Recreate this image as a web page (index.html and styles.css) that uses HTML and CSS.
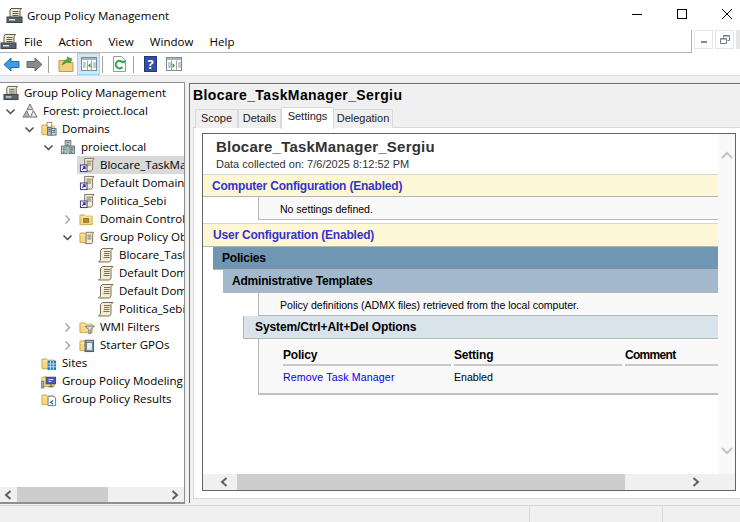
FILE: index.html
```html
<!DOCTYPE html>
<html lang="en">
<head>
    <meta charset="UTF-8">
    <title>Group Policy Management</title>
    <link rel="stylesheet" href="styles.css">
</head>
<body>

<svg class="defs" width="0" height="0">
    <symbol id="scroll" viewBox="0 0 16 16">
        <path d="M4.500 1.500h10.500l-2 2v9.500l-1.500 2h-11l2-2v-9.500z" fill="#f3ecd0" stroke="#77705c"/>
        <path d="M6 4.500h6M6 6.500h5.500M6 8.500h5.500M5.500 10.500h6" stroke="#77705c"/>
    </symbol>
    <symbol id="gpm" viewBox="0 0 17 17">
        <path d="M5 1.500h10.500l-1.500 2v7h-10v-7z" fill="#f3ecd0" stroke="#5c5a50"/>
        <path d="M6.500 4.500h6M6.500 6.500h6M6.500 8.500h6" stroke="#5c5a50"/>
        <rect x="1" y="10" width="15" height="5.500" fill="#56636b" stroke="#3a4247"/>
        <rect x="3" y="12" width="6" height="1.500" fill="#d8dde0"/>
    </symbol>
    <symbol id="link" viewBox="0 0 17 17">
        <path d="M6 1.500h10l-1.500 2v9.500l-1.500 2h-8v-4l1-2v-5.500z" fill="#f3ecd0" stroke="#77705c"/>
        <path d="M8 4.500h5.500M8 6.500h5M8 8.500h5" stroke="#77705c"/>
        <rect x="1.500" y="8.500" width="7" height="7" fill="#fff" stroke="#33367a"/>
        <path d="M3.500 13.500l2.500-2.500M4 10.500h2.500v2.500" fill="none" stroke="#2b2f9a" stroke-width="1.200"/>
    </symbol>
    <symbol id="forest" viewBox="0 0 17 17">
        <path d="M8.500 1l3 6h-6z" fill="#d8d8d8" stroke="#6e6e6e"/>
        <path d="M5 8l3 7h-7z" fill="#b4b4b4" stroke="#6e6e6e"/>
        <path d="M12 8l4 7h-7z" fill="#e6e6e6" stroke="#6e6e6e"/>
    </symbol>
    <symbol id="folder" viewBox="0 0 17 17">
        <path d="M1 4.500v10h13v-9h-7l-1.500-1.500z" fill="#f4d77f" stroke="#c9a64f"/>
        <path d="M1.500 6.500h12" stroke="#fdf0bd"/>
    </symbol>
    <symbol id="domains" viewBox="0 0 17 17">
        <use href="#folder"/>
        <rect x="6.500" y="1.500" width="5" height="5" fill="#fff" stroke="#a08c58"/>
        <rect x="7" y="7" width="4" height="8" fill="#b7c2c8" stroke="#5d6d75"/>
        <rect x="11" y="8" width="5" height="7" fill="#d0d8dc" stroke="#5d6d75"/>
        <path d="M8 9h2M8 11h2M12 10h3M12 12h3" stroke="#4d5a61"/>
    </symbol>
    <symbol id="domain" viewBox="0 0 17 17">
        <rect x="5.500" y="1.500" width="6" height="6" fill="#cdd5d9" stroke="#66757c"/>
        <rect x="1.500" y="7.500" width="6" height="8" fill="#cdd5d9" stroke="#66757c"/>
        <rect x="9.500" y="7.500" width="6" height="8" fill="#b5c0c6" stroke="#66757c"/>
        <path d="M7 3.500h3M3 9.500h3M11 9.500h3M3 11.500h3M11 11.500h3" stroke="#4d5a61"/>
        <rect x="3" y="13" width="2" height="2" fill="#27b03c"/>
        <rect x="11" y="13" width="2" height="2" fill="#27b03c"/>
        <rect x="7" y="5" width="2" height="2" fill="#27b03c"/>
    </symbol>
    <symbol id="dc" viewBox="0 0 17 17">
        <use href="#folder"/>
        <rect x="5" y="8" width="5" height="4" fill="#b9962f" stroke="#8a6f22"/>
    </symbol>
    <symbol id="gpofolder" viewBox="0 0 17 17">
        <use href="#folder"/>
        <path d="M7.500 3.500h8l-1 1.500v9l-1 1.500h-7l1-1.500v-9z" fill="#f3ecd0" stroke="#77705c"/>
        <path d="M9 6.500h4M9 8.500h4M9 10.500h4" stroke="#77705c"/>
    </symbol>
    <symbol id="wmi" viewBox="0 0 17 17">
        <use href="#folder"/>
        <path d="M6.500 7.500h10l-4 4v4h-2v-4z" fill="#d0dbe2" stroke="#65767f"/>
    </symbol>
    <symbol id="starter" viewBox="0 0 17 17">
        <use href="#folder"/>
        <rect x="6.500" y="3.500" width="9" height="12" fill="#9fb6cc" stroke="#3f5368"/>
        <rect x="8" y="6" width="6" height="8" fill="#e9eef3" stroke="#3f5368" stroke-width=".6"/>
    </symbol>
    <symbol id="sites" viewBox="0 0 17 17">
        <use href="#folder"/>
        <rect x="7" y="6" width="9" height="10" fill="#1f77c4"/>
        <path d="M7 9.500h9M7 12.500h9M10 6v10M13 6v10" stroke="#cfe6f8"/>
    </symbol>
    <symbol id="model" viewBox="0 0 17 17">
        <use href="#folder"/>
        <rect x="0" y="9" width="3" height="7" fill="#9aa7ae" stroke="#5d6d75" stroke-width=".7"/>
        <rect x="5.500" y="4.500" width="10" height="7" fill="#4a5bb0" stroke="#3b4360"/>
        <path d="M8 7h5M8 9h3" stroke="#dfe5f7"/>
        <path d="M8 14.500h5M10.500 12v2" stroke="#5d6d75" stroke-width="1.500"/>
    </symbol>
    <symbol id="results" viewBox="0 0 17 17">
        <use href="#folder"/>
        <path d="M7.500 5.500h6l2 2v8h-8z" fill="#fff" stroke="#6c7378"/>
        <path d="M13 10l-3 2 3 2" fill="none" stroke="#2b6fb0" stroke-width="1.200"/>
    </symbol>
    <symbol id="chev-open" viewBox="0 0 14 9">
        <path d="M3.500 2.500l4 4 4-4" fill="none" stroke="#4b4b4b" stroke-width="1.500"/>
    </symbol>
    <symbol id="chev-shut" viewBox="0 0 14 9">
        <path d="M5.500 .5l4 4-4 4" fill="none" stroke="#a6a6a6" stroke-width="1.500"/>
    </symbol>
    <symbol id="arrow-l" viewBox="0 0 8 10">
        <path d="M6.500 1l-4.500 4 4.500 4" fill="none" stroke="#606060" stroke-width="2"/>
    </symbol>
    <symbol id="arrow-r" viewBox="0 0 8 10">
        <path d="M1.500 1l4.500 4-4.500 4" fill="none" stroke="#606060" stroke-width="2"/>
    </symbol>
</svg>

<div class="titlebar">
    <svg class="title-icon"><use href="#gpm"/></svg>
    <span class="title-text">Group Policy Management</span>
    <div class="winbtns">
        <svg class="winbtn" viewBox="0 0 12 12"><path d="M1 6.500h10" stroke="#000"/></svg>
        <svg class="winbtn" viewBox="0 0 12 12"><rect x="1.500" y="1.500" width="9" height="9" fill="none" stroke="#000"/></svg>
        <svg class="winbtn" viewBox="0 0 12 12"><path d="M1 1l10 10M11 1l-10 10" stroke="#000"/></svg>
    </div>
</div>

<div class="menubar">
    <div class="menu-left">
        <svg class="menu-icon"><use href="#gpm"/></svg>
        <span>File</span>
        <span>Action</span>
        <span>View</span>
        <span>Window</span>
        <span>Help</span>
    </div>
    <div class="mdi">
        <div class="mdi-btn"><svg width="8" height="8" viewBox="0 0 8 8"><rect x="1" y="5" width="6" height="2" fill="#7c8a9c"/></svg></div>
        <div class="mdi-btn"><svg width="10" height="10" viewBox="0 0 10 10"><path d="M3.500 2.500v-2h6v5h-2M.5 3.500h6v5h-6z" fill="none" stroke="#6f7d8e"/><path d="M1 4h5M4 1h5" stroke="#6f7d8e"/></svg></div>
        <div class="mdi-btn mdi-close"><svg width="8" height="8" viewBox="0 0 8 8"><path d="M1 1l6 6M7 1l-6 6" stroke="#9aa5b1" stroke-width="2"/></svg></div>
    </div>
</div>

<div class="toolbar">
    <div class="tool"><svg width="17" height="15" viewBox="0 0 17 15"><path d="M1 7.500l7-6.500v3.500h8v6h-8v3.500z" fill="#3f9be8" stroke="#1f6fb5"/></svg></div>
    <div class="tool"><svg width="17" height="15" viewBox="0 0 17 15"><path d="M16 7.500l-7-6.500v3.500h-8v6h8v3.500z" fill="#8a8a8a" stroke="#666"/></svg></div>
    <div class="sep"></div>
    <div class="tool"><svg width="16" height="16" viewBox="0 0 16 16"><path d="M1 4.500v11h14v-9h-6l-2-2z" fill="#f2d27a" stroke="#c09a45"/><path d="M4 9c1-3 3-5 6-6l-1-2 5 2-2 4-1-1.500c-2 .5-4 1.500-7 3.500z" fill="#4caf3f" stroke="#2f7f28" stroke-width=".6"/></svg></div>
    <div class="tool tool-on"><svg width="16" height="14" viewBox="0 0 16 14"><rect x=".5" y=".5" width="15" height="13" fill="#fff" stroke="#7d8a93"/><rect x="1" y="1" width="14" height="2" fill="#a9b5bd"/><path d="M6.500 3.500v10M10.500 3.500v10" stroke="#9aa5ad"/><path d="M2 6h3M2 8h3M2 10h3M12 6h3M12 8h3M12 10h3" stroke="#8a98a2"/><path d="M9.500 6v5l-2.500-2.500z" fill="#2a9d4b"/></svg></div>
    <div class="sep"></div>
    <div class="tool"><svg width="15" height="16" viewBox="0 0 15 16"><path d="M1.500.5h8l4 4v11h-12z" fill="#fff" stroke="#9a9a9a"/><path d="M11 7a3.800 3.800 0 1 0-.5 4" fill="none" stroke="#2fa84f" stroke-width="2"/><path d="M9 5.500l3.500 2 1-3.500z" fill="#2fa84f"/></svg></div>
    <div class="sep"></div>
    <div class="tool"><span class="help-btn">?</span></div>
    <div class="tool"><svg width="16" height="14" viewBox="0 0 16 14"><rect x=".5" y=".5" width="15" height="13" fill="#fff" stroke="#7d8a93"/><rect x="1" y="1" width="14" height="2" fill="#a9b5bd"/><path d="M5.500 3.500v10M10.500 3.500v10" stroke="#9aa5ad"/><path d="M2 6h3M2 8h3M2 10h3M12 6h3M12 8h3M12 10h3" stroke="#8a98a2"/><path d="M6.500 6v5l2.500-2.500z" fill="#2a9d4b"/></svg></div>
</div>

<div class="main">
    <div class="left">
        <div class="tree">
            <div class="row lv0"><div class="node"><svg class="ico"><use href="#gpm"/></svg>Group Policy Management</div></div>
            <div class="row lv1"><svg class="chev"><use href="#chev-open"/></svg><div class="node"><svg class="ico"><use href="#forest"/></svg>Forest: proiect.local</div></div>
            <div class="row lv2"><svg class="chev"><use href="#chev-open"/></svg><div class="node"><svg class="ico"><use href="#domains"/></svg>Domains</div></div>
            <div class="row lv3"><svg class="chev"><use href="#chev-open"/></svg><div class="node"><svg class="ico"><use href="#domain"/></svg>proiect.local</div></div>
            <div class="row lv4"><span class="chev"></span><div class="node selected"><svg class="ico"><use href="#link"/></svg>Blocare_TaskManager_Sergiu</div></div>
            <div class="row lv4"><span class="chev"></span><div class="node"><svg class="ico"><use href="#link"/></svg>Default Domain Policy</div></div>
            <div class="row lv4"><span class="chev"></span><div class="node"><svg class="ico"><use href="#link"/></svg>Politica_Sebi</div></div>
            <div class="row lv4"><svg class="chev"><use href="#chev-shut"/></svg><div class="node"><svg class="ico"><use href="#dc"/></svg>Domain Controllers</div></div>
            <div class="row lv4"><svg class="chev"><use href="#chev-open"/></svg><div class="node"><svg class="ico"><use href="#gpofolder"/></svg>Group Policy Objects</div></div>
            <div class="row lv5"><span class="chev"></span><div class="node"><svg class="ico"><use href="#scroll"/></svg>Blocare_TaskManager_Sergiu</div></div>
            <div class="row lv5"><span class="chev"></span><div class="node"><svg class="ico"><use href="#scroll"/></svg>Default Domain Controllers Policy</div></div>
            <div class="row lv5"><span class="chev"></span><div class="node"><svg class="ico"><use href="#scroll"/></svg>Default Domain Policy</div></div>
            <div class="row lv5"><span class="chev"></span><div class="node"><svg class="ico"><use href="#scroll"/></svg>Politica_Sebi</div></div>
            <div class="row lv4"><svg class="chev"><use href="#chev-shut"/></svg><div class="node"><svg class="ico"><use href="#wmi"/></svg>WMI Filters</div></div>
            <div class="row lv4"><svg class="chev"><use href="#chev-shut"/></svg><div class="node"><svg class="ico"><use href="#starter"/></svg>Starter GPOs</div></div>
            <div class="row lv2"><span class="chev"></span><div class="node"><svg class="ico"><use href="#sites"/></svg>Sites</div></div>
            <div class="row lv2"><span class="chev"></span><div class="node"><svg class="ico"><use href="#model"/></svg>Group Policy Modeling</div></div>
            <div class="row lv2"><span class="chev"></span><div class="node"><svg class="ico"><use href="#results"/></svg>Group Policy Results</div></div>
        </div>
        <div class="hscroll hscroll-left">
            <svg class="arrow"><use href="#arrow-l"/></svg>
            <div class="thumb"></div>
            <svg class="arrow arrow-end"><use href="#arrow-r"/></svg>
        </div>
    </div>

    <div class="right">
        <h1 class="pane-title">Blocare_TaskManager_Sergiu</h1>
        <div class="tabs">
            <div class="tab tab-scope">Scope</div>
            <div class="tab tab-details">Details</div>
            <div class="tab tab-settings active">Settings</div>
            <div class="tab tab-deleg">Delegation</div>
        </div>
        <div class="tabpanel">
            <div class="report">
                <div class="report-top">
                    <div class="report-body">
                        <div class="report-head">
                            <h2>Blocare_TaskManager_Sergiu</h2>
                            <p>Data collected on: 7/6/2025 8:12:52 PM</p>
                        </div>
                        <div class="he he-config">Computer Configuration (Enabled)</div>
                        <div class="he-text">No settings defined.</div>
                        <div class="he he-config he-user">User Configuration (Enabled)</div>
                        <div class="he he-policies">Policies</div>
                        <div class="he he-admin">Administrative Templates</div>
                        <div class="he-text">Policy definitions (ADMX files) retrieved from the local computer.</div>
                        <div class="he he-system">System/Ctrl+Alt+Del Options</div>
                        <div class="settings">
                            <div class="th">Policy</div>
                            <div class="th">Setting</div>
                            <div class="th th-comment">Comment</div>
                            <div class="td"><a href="#">Remove Task Manager</a></div>
                            <div class="td">Enabled</div>
                            <div class="td"></div>
                        </div>
                    </div>
                    <div class="vscroll">
                        <svg width="12" height="8" viewBox="0 0 12 8"><path d="M1 7l5-5 5 5" fill="none" stroke="#c4c4c4" stroke-width="2"/></svg>
                        <svg width="12" height="8" viewBox="0 0 12 8"><path d="M1 1l5 5 5-5" fill="none" stroke="#c4c4c4" stroke-width="2"/></svg>
                    </div>
                </div>
                <div class="hscroll hscroll-right">
                    <svg class="arrow"><use href="#arrow-l"/></svg>
                    <div class="thumb"></div>
                    <svg class="arrow arrow-end"><use href="#arrow-r"/></svg>
                </div>
            </div>
        </div>
    </div>
</div>

<div class="statusbar">
    <div class="status-cell status-a"></div>
    <div class="status-cell status-b"></div>
    <div class="status-cell status-c"></div>
</div>

</body>
</html>
```

FILE: styles.css
```css
html, body {
    margin: 0;
    padding: 0;
}
body {
    width: 740px;
    height: 522px;
    overflow: hidden;
    background-color: #f0f0f0;
    font-family: "Open Sans", "Noto Sans", sans-serif;
    font-size: 11.5px;
    color: #000;
    display: flex;
    flex-direction: column;
}
.defs {
    position: absolute;
}

/* window chrome */
.titlebar {
    height: 30px;
    background-color: #fff;
    display: flex;
    align-items: center;
    flex-shrink: 0;
}
.title-icon {
    width: 17px;
    height: 17px;
    margin-left: 6px;
}
.title-text {
    margin-left: 4px;
}
.winbtns {
    margin-left: auto;
    display: flex;
    margin-right: 7px;
    margin-bottom: 2px;
    gap: 33px;
}
.winbtn {
    width: 12px;
    height: 12px;
}
.menubar {
    height: 22px;
    background-color: #fff;
    border-bottom: 1px solid #b4b4b4;
    display: flex;
    flex-shrink: 0;
    justify-content: space-between;
}
.menu-left {
    flex: 1;
    display: flex;
    align-items: center;
    gap: 16px;
}
.menu-left span {
    letter-spacing: 0.05px;
}
.menu-icon {
    width: 17px;
    height: 17px;
    margin-right: -9px;
}
.mdi {
    width: 49px;
    display: flex;
    gap: 2px;
    padding-left: 2px;
    margin-bottom: -1px;
    background-color: #fff;
    border-left: 1px solid #b4b4b4;
    box-sizing: border-box;
}
.mdi-btn {
    width: 17px;
    height: 17px;
    border: 1px solid #e6e6e6;
    display: flex;
    align-items: center;
    justify-content: center;
    flex-shrink: 0;
}
.mdi-close {
    background-color: #e6e6e6;
}
.toolbar {
    height: 22px;
    background-color: #fff;
    border-bottom: 1px solid #dcdcdc;
    display: flex;
    flex-shrink: 0;
}
.tool {
    width: 23px;
    height: 22px;
    box-sizing: border-box;
    display: flex;
    align-items: center;
    justify-content: center;
    flex-shrink: 0;
}
.tool-on {
    background-color: #cce8ff;
    border: 1px solid #99d1ff;
}
.sep {
    width: 1px;
    height: 17px;
    margin: 3px 5px 0 2px;
    background-color: #a0a0a0;
}
.help-btn {
    width: 13px;
    height: 16px;
    background-color: #2f4fa8;
    border: 1px solid #22387a;
    box-sizing: border-box;
    color: #fff;
    font-weight: bold;
    font-size: 13px;
    line-height: 14px;
    text-align: center;
}

/* panes */
.main {
    margin-top: 6px;
    height: 422px;
    display: flex;
    flex-shrink: 0;
}
.left {
    width: 185px;
    box-sizing: border-box;
    background-color: #fff;
    border-top: 1px solid #8a8f93;
    border-right: 1px solid #8a8f93;
    border-bottom: 2px solid #8a8f93;
    display: flex;
    flex-direction: column;
}
.tree {
    flex: 1;
    overflow: hidden;
    padding-top: 1px;
}
.row {
    height: 18px;
    display: flex;
    align-items: center;
    white-space: nowrap;
}
.lv0 { padding-left: 3px; }
.lv1 { padding-left: 3px; }
.lv2 { padding-left: 22px; }
.lv3 { padding-left: 41px; }
.lv4 { padding-left: 60px; }
.lv5 { padding-left: 79px; }
.chev {
    width: 14px;
    height: 9px;
    margin-right: 5px;
    flex-shrink: 0;
}
.node {
    flex: 1;
    min-width: 0;
    height: 18px;
    box-sizing: border-box;
    display: flex;
    align-items: center;
    gap: 5px;
    overflow: hidden;
    margin-left: -2px;
    padding-left: 2px;
    padding-bottom: 2px;
}
.selected {
    background-color: #d9d9d9;
}
.ico {
    width: 16px;
    height: 16px;
    margin-top: 2px;
    flex-shrink: 0;
}

/* scrollbars */
.hscroll {
    display: flex;
    align-items: center;
    background-color: #f0f0f0;
    flex-shrink: 0;
}
.hscroll-left {
    height: 15px;
}
.hscroll-right {
    height: 16px;
}
.arrow {
    width: 8px;
    height: 10px;
    flex-shrink: 0;
}
.thumb {
    height: 100%;
    background-color: #cdcdcd;
}
.hscroll-left .arrow {
    margin-left: 4px;
}
.hscroll-left .thumb {
    width: 91px;
    margin-left: 5px;
}
.hscroll-left .arrow-end {
    margin-left: auto;
    margin-right: 5px;
}
.hscroll-right .arrow {
    margin-left: 17px;
}
.hscroll-right .thumb {
    width: 388px;
    margin-left: 9px;
}
.hscroll-right .arrow-end {
    margin-left: auto;
    margin-right: 35px;
}
.vscroll {
    width: 17px;
    background-color: #f9f9f9;
    display: flex;
    flex-direction: column;
    justify-content: space-between;
    align-items: center;
    padding: 17px 0 19px;
    box-sizing: border-box;
    flex-shrink: 0;
}

/* right side */
.right {
    width: 551px;
    margin-left: 4px;
    box-sizing: border-box;
    border-top: 1px solid #6e6e6e;
    border-left: 1px solid #6e6e6e;
    margin-top: 1px;
    height: 420px;
    display: flex;
    flex-direction: column;
}
.pane-title {
    margin: 0;
    height: 22px;
    padding-left: 3px;
    font-family: "Liberation Sans", Arial, sans-serif;
    font-size: 14px;
    line-height: 22px;
    font-weight: bold;
    letter-spacing: 0.4px;
    color: #000;
}
.tabs {
    height: 21px;
    padding-left: 5px;
    display: flex;
    align-items: flex-end;
    position: relative;
    z-index: 1;
    font-family: "Liberation Sans", Arial, sans-serif;
    font-size: 11px;
}
.tab {
    height: 19px;
    box-sizing: border-box;
    margin-bottom: -1px;
    padding-top: 2px;
    background-color: #f0f0f0;
    border: 1px solid #d9d9d9;
    border-bottom: none;
    text-align: center;
    color: #222;
}
.tab-scope { width: 43px; }
.tab-details { width: 43px; }
.tab-settings { width: 53px; }
.tab-deleg { width: 60px; margin-left: -1px; }
.active {
    height: 22px;
    padding-top: 2px;
    background-color: #fff;
    margin-bottom: -2px;
}
.tabpanel {
    width: 547px;
    height: 372px;
    box-sizing: border-box;
    margin-left: 3px;
    background-color: #fff;
    border: 1px solid #d9d9d9;
    border-right: none;
    padding: 5px 4px 7px 8px;
}
.report {
    height: 358px;
    box-sizing: border-box;
    border: 1px solid #646464;
    display: flex;
    flex-direction: column;
}
.report-top {
    flex: 1;
    min-height: 0;
    display: flex;
}
.report-body {
    flex: 1;
    min-width: 0;
    font-family: "Liberation Sans", Arial, sans-serif;
    font-size: 10.6px;
}
.report-head {
    height: 40px;
    padding-left: 13px;
    box-sizing: border-box;
    padding-top: 4px;
}
.report-head h2 {
    margin: 0;
    font-size: 15px;
    line-height: 17px;
    letter-spacing: 0.22px;
    color: #333;
}
.report-head p {
    margin: 2px 0 0;
    font-size: 11px;
    line-height: 15px;
    color: #333;
}
.he {
    height: 23px;
    line-height: 22px;
    box-sizing: border-box;
    font-size: 12px;
    font-weight: bold;
    letter-spacing: -0.2px;
    border-bottom: 1px solid #b5b5b5;
}
.he-config {
    padding-left: 9px;
    color: #3333cc;
    background-color: #fef7d6;
    border-top: 1px solid #d8d8c8;
}
.he-user {
    height: 24px;
    margin-top: 3px;
    padding-left: 10px;
}
.he-policies {
    margin-left: 10px;
    padding-left: 9px;
    background-color: #6f96b2;
}
.he-admin {
    margin-left: 20px;
    padding-left: 9px;
    background-color: #a2b9cd;
}
.he-system {
    margin-left: 40px;
    padding-left: 11px;
    letter-spacing: -0.1px;
    background-color: #d9e3ea;
    border-left: 1px solid #b5b5b5;
}
.he-text {
    height: 23px;
    line-height: 24px;
    box-sizing: border-box;
    margin-left: 55px;
    padding-left: 21px;
    letter-spacing: -0.04px;
    background-color: #f9f9f9;
    border-left: 1px solid #b5b5b5;
    border-bottom: 1px solid #b5b5b5;
}
.settings {
    margin-left: 55px;
    height: 56px;
    box-sizing: border-box;
    padding-left: 24px;
    background-color: #f9f9f9;
    border-left: 1px solid #b5b5b5;
    border-bottom: 2px solid #c0c0c0;
    display: grid;
    grid-template-columns: 168px 168px 93px;
    grid-template-rows: 27px 24px;
    column-gap: 3px;
}
.th {
    font-size: 12px;
    font-weight: bold;
    letter-spacing: -0.2px;
    padding-top: 9px;
    border-bottom: 2px solid #c8c8c8;
    line-height: 15px;
}
.th-comment {
    letter-spacing: -0.7px;
}
.td {
    padding-top: 4px;
    line-height: 15px;
}
.td a {
    color: #0000ee;
    letter-spacing: 0.15px;
    text-decoration: none;
}
.statusbar {
    margin-top: 1px;
    height: 17px;
    border-top: 1px solid #d9d9d9;
    display: flex;
    flex-shrink: 0;
}
.status-cell {
    box-sizing: border-box;
    border-right: 1px solid #d9d9d9;
}
.status-a { width: 530px; }
.status-b { width: 133px; }
.status-c { flex: 1; border-right: none; }
```
